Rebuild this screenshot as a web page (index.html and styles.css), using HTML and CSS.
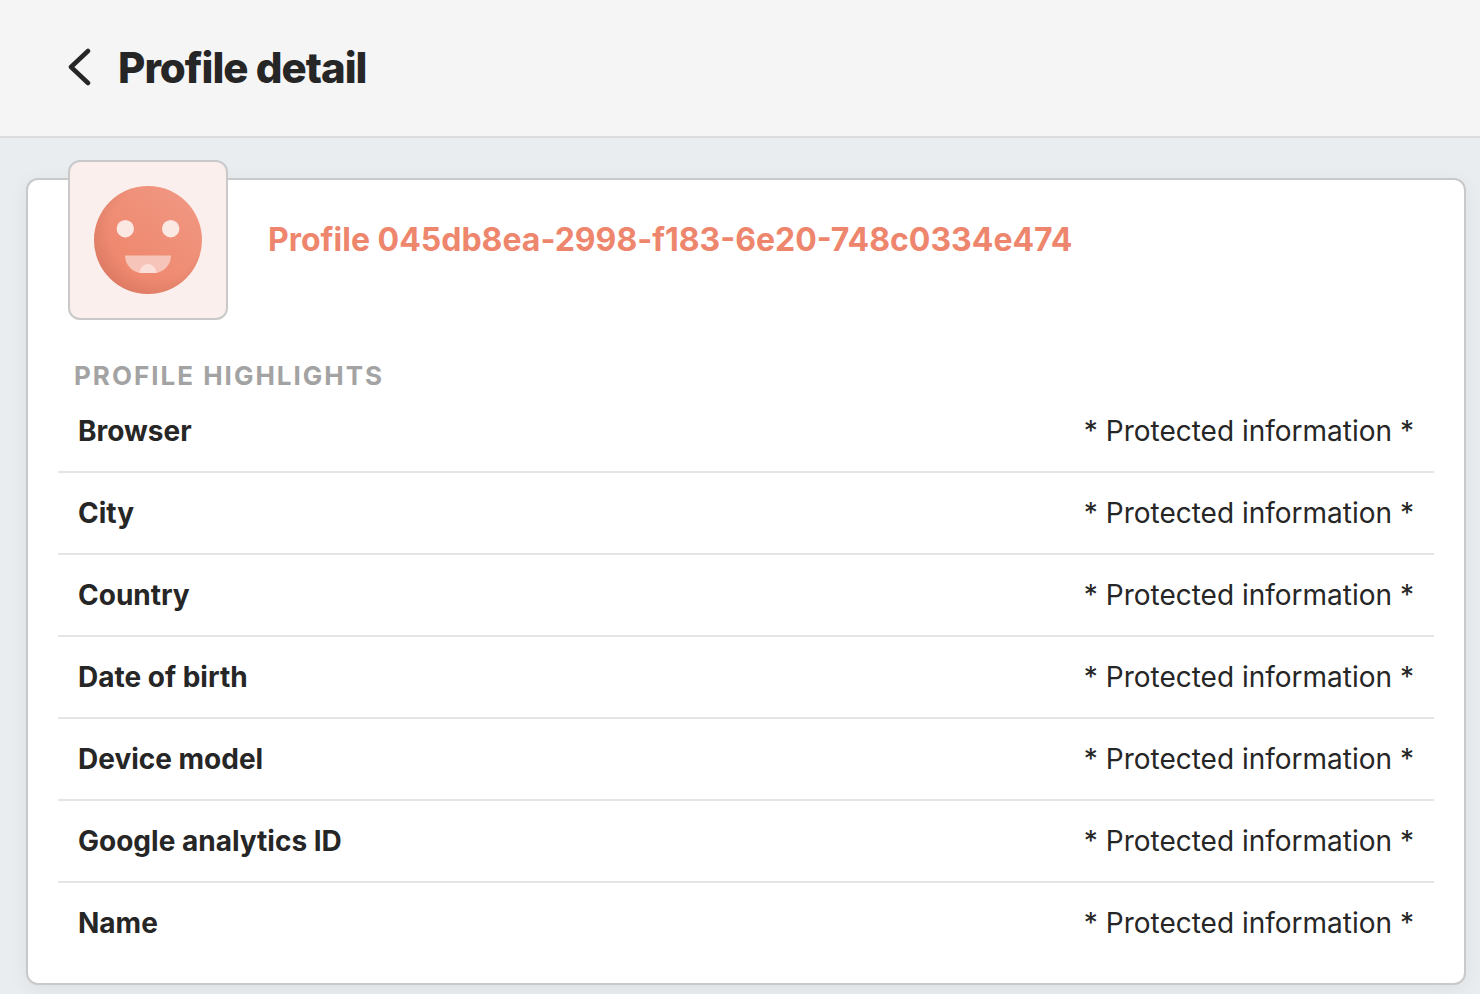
FILE: index.html
```
<!DOCTYPE html>
<html lang="en">
<head>
    <meta charset="UTF-8">
    <meta name="viewport" content="width=device-width, initial-scale=1.0">
    <title>Profile detail</title>
    <link rel="stylesheet" href="styles.css">
</head>
<body>
    <header class="page-header">
        <button class="back-button" type="button" aria-label="Back">
            <svg width="24" height="40" viewBox="0 0 24 40" fill="none" stroke="#262626" stroke-width="4.500" stroke-linecap="round" stroke-linejoin="round">
                <path d="M20 3L3 19L20 35"/>
            </svg>
        </button>
        <h1 class="page-title">Profile detail</h1>
    </header>
    <main>
        <section class="card">
            <div class="profile">
                <div class="avatar">
                    <svg width="108" height="108" viewBox="0 0 108 108">
                        <defs>
                            <linearGradient id="face" x1="0.2" y1="0.9" x2="0.85" y2="0.1">
                                <stop offset="0" stop-color="#ee866d"/>
                                <stop offset="0.3" stop-color="#ef8a71"/>
                                <stop offset="1" stop-color="#f09681"/>
                            </linearGradient>
                            <radialGradient id="shade" cx="0.58" cy="0.42" r="0.62">
                                <stop offset="0.7" stop-color="#a05040" stop-opacity="0"/>
                                <stop offset="1" stop-color="#a05040" stop-opacity="0.22"/>
                            </radialGradient>
                        </defs>
                        <circle cx="54" cy="54" r="54" fill="url(#face)"/>
                        <circle cx="54" cy="54" r="54" fill="url(#shade)"/>
                        <circle cx="31.300" cy="42.700" r="8.700" fill="#fce8e3"/>
                        <circle cx="76.700" cy="42.700" r="8.700" fill="#fce8e3"/>
                        <path d="M31 69.500H77C77 79 69.500 87 60 87H48C38.500 87 31 79 31 69.500Z" fill="#f6c4b8"/>
                        <path d="M45.500 87C46.500 81.500 49.500 78 54 78S61.500 81.500 62.500 87Z" fill="#fbdfd9"/>
                    </svg>
                </div>
                <h2 class="profile-name">Profile 045db8ea-2998-f183-6e20-748c0334e474</h2>
            </div>
            <h3 class="section-title">Profile highlights</h3>
            <table class="highlights">
                <tr>
                    <th scope="row">Browser</th>
                    <td>* Protected information *</td>
                </tr>
                <tr>
                    <th scope="row">City</th>
                    <td>* Protected information *</td>
                </tr>
                <tr>
                    <th scope="row">Country</th>
                    <td>* Protected information *</td>
                </tr>
                <tr>
                    <th scope="row">Date of birth</th>
                    <td>* Protected information *</td>
                </tr>
                <tr>
                    <th scope="row">Device model</th>
                    <td>* Protected information *</td>
                </tr>
                <tr>
                    <th scope="row">Google analytics ID</th>
                    <td>* Protected information *</td>
                </tr>
                <tr>
                    <th scope="row">Name</th>
                    <td>* Protected information *</td>
                </tr>
            </table>
        </section>
    </main>
</body>
</html>
```
FILE: styles.css
```
* {
    box-sizing: border-box;
}
body {
    margin: 0;
    font-family: Inter, "Liberation Sans", sans-serif;
    font-size: 28px;
    line-height: 40px;
    color: #262626;
    background-color: #e9edf0;
}
h1, h2, h3 {
    margin: 0;
    font-weight: 700;
}
.page-header {
    display: flex;
    align-items: center;
    gap: 26px;
    padding: 40px 68px;
    background: #f5f5f5;
    border-bottom: 2px solid #dcdcdc;
}
.back-button {
    display: flex;
    padding: 0;
    border: none;
    background: none;
    cursor: pointer;
}
.page-title {
    font-size: 42px;
    line-height: 56px;
    font-weight: 800;
    letter-spacing: -1px;
}
main {
    padding: 40px 14px 9px 26px;
}
.card {
    padding: 0 30px 20px;
    background: #fff;
    border: 2px solid #c9c9c9;
    border-radius: 12px;
    box-shadow: 0 4px 20px rgba(0,0,0,0.06);
}
.profile {
    display: flex;
    align-items: center;
    gap: 40px;
    margin-top: -20px;
    padding: 0 10px;
}
.avatar {
    display: flex;
    flex-shrink: 0;
    padding: 24px;
    background: #fbefed;
    border: 2px solid #c9c9c9;
    border-radius: 12px;
}
.profile-name {
    font-size: 32px;
    color: #ee866d;
}
.section-title {
    padding: 40px 16px 0;
    font-size: 26px;
    line-height: 31px;
    letter-spacing: 2px;
    text-transform: uppercase;
    color: #a3a3a3;
}
.highlights {
    width: 100%;
    border-spacing: 0;
}
.highlights th,
.highlights td {
    padding: 20px;
    border-bottom: 2px solid #e5e5e5;
}
.highlights tr:last-child th,
.highlights tr:last-child td {
    border-bottom: none;
}
.highlights th {
    text-align: left;
}
.highlights td {
    text-align: right;
}
```
